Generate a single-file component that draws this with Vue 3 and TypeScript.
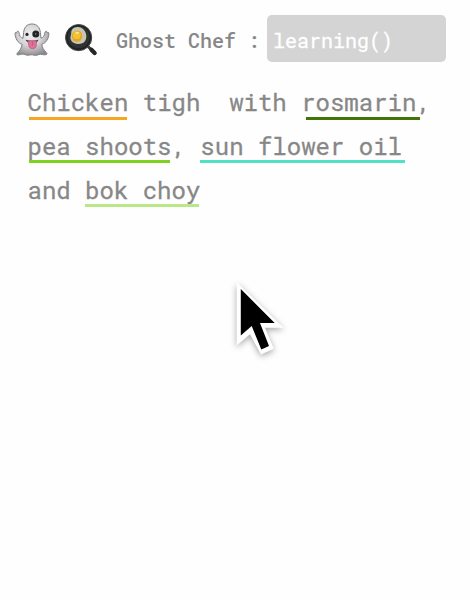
<script setup lang="ts">
interface Token {
  text: string
  tone?: string
}

const lines: Token[][] = [
  [{ text: 'Chicken', tone: 'chicken' }, { text: ' tigh  with ' }, { text: 'rosmarin', tone: 'rosmarin' }, { text: ',' }],
  [{ text: 'pea shoots', tone: 'pea' }, { text: ', ' }, { text: 'sun flower oil', tone: 'oil' }],
  [{ text: 'and ' }, { text: 'bok choy', tone: 'bok' }],
]
</script>

<template>
  <main class="screen">
    <header class="bar">
      <svg class="ghost" viewBox="0 0 36 34" aria-hidden="true">
        <defs>
          <radialGradient id="body" cx="45%" cy="35%" r="70%">
            <stop offset="0" stop-color="#f0f0f1" />
            <stop offset="0.5" stop-color="#d4d4d6" />
            <stop offset="1" stop-color="#88888b" />
          </radialGradient>
        </defs>
        <path d="M18 1C12.5 1 10.2 4.5 9.6 9.5L9 15.3C6.8 15 5.2 12.7 5 9.7C4.8 7.6 2.7 7.7 2.6 9.8C2.1 9 .8 9.3 1 10.8C1.3 15.5 4 20.3 8.2 21.3C7.5 25 5.8 28.1 3.1 30.3C2.1 31.4 3.4 32.2 5 31.8C7.7 31 9.4 30.8 11.4 31.7C14 33 16 31.4 18.4 31.8C21 32.7 23 32.4 25 31.4C27.5 30.7 29 32.3 31.7 31.7C33.3 31.4 33.2 30.3 32.2 29.4C29.5 27 28.3 24.4 27.8 21.2C32 20.1 34.6 15.8 34.9 10.8C35 9.2 33.9 8.8 33.2 9.8C33 7.8 31.2 7.7 30.9 9.8C30.5 12.8 29.2 14.7 27 15.2L26.4 9.5C25.8 4.5 23.3 1 18 1Z" fill="url(#body)" stroke="#808083" stroke-width="1" />
        <ellipse cx="13" cy="11.4" rx="1.6" ry="1.7" fill="#28282a" />
        <circle cx="21.8" cy="11.1" r="3.5" fill="#242426" />
        <circle cx="21.7" cy="10.9" r="0.8" fill="#777" />
        <path d="M11.5 16.8Q18.2 18.8 24.4 16.7Q23.4 20.2 18 20.2Q13 20 11.5 16.8Z" fill="#4b3339" />
        <path d="M14.1 17.8H22.4V22.2C22.4 27 14.8 27 14.6 22.2Z" fill="#df7097" stroke="#b94e76" stroke-width="0.6" />
        <path d="M18.4 18.5V22.5" stroke="#bd4f79" stroke-width="0.8" />
      </svg>
      <svg class="pan" viewBox="0 0 36 36" aria-hidden="true">
        <path d="M23.5 23L31 30.3" stroke="#393a39" stroke-width="3" stroke-linecap="round" />
        <path d="M27.4 26.7L30.6 30" stroke="#252625" stroke-width="4.2" stroke-linecap="round" />
        <circle cx="14.6" cy="14.6" r="13.1" fill="#202221" stroke="#494b49" stroke-width="1" />
        <circle cx="14.6" cy="14.2" r="11" fill="#303331" />
        <path d="M12 4.2C17 3 20.6 6.4 21.9 10.6C23.2 15 21.6 19.6 17.6 20.6C14.5 21.8 8.3 20.8 7 17C5.6 14.2 7.4 12.2 7.2 9.6C7.2 6.8 9 4.6 12 4.2Z" fill="#c5c5b8" />
        <ellipse cx="13.1" cy="13.1" rx="5.2" ry="5.7" fill="#e8a51f" />
        <ellipse cx="12.8" cy="12.2" rx="3.8" ry="3.9" fill="#f2c435" />
        <ellipse cx="13.2" cy="9.8" rx="1.6" ry="0.9" fill="#fff0a5" />
      </svg>
      <h1 class="title">Ghost Chef :</h1>
      <div class="state">learning()</div>
    </header>
    <section class="recipe">
      <p v-for="(line, i) in lines" :key="i" class="line"><span v-for="(t, j) in line" :key="j" :class="t.tone ? ['term', t.tone] : 'plain'">{{ t.text }}</span></p>
    </section>
    <svg class="pointer" viewBox="0 0 70 90" aria-hidden="true">
      <path d="M6.7 11V74.5L20 63.3L31 83.6L43.8 77.8L35 56.8H53.5Z" fill="#fff" />
      <path d="M10.8 18V64.5L21.7 55L31.3 78.5L39 75L30 52H44.7Z" fill="#000" />
    </svg>
  </main>
</template>

<style>
body {
  background: #fefefe;
}
</style>

<style scoped>
.screen {
  position: relative;
  box-sizing: border-box;
  width: 470px;
  height: 600px;
  padding: 15px 0 0 14px;
  overflow: hidden;
  background: #fefefe;
  color: #878787;
  font-family: "Roboto Mono", "Liberation Mono", monospace;
}
.bar {
  display: flex;
  align-items: center;
  height: 47px;
}
.ghost {
  width: 36px;
  height: 34px;
  margin-top: 3px;
}
.pan {
  width: 36px;
  height: 36px;
  margin: 5px 0 0 14px;
}
.title {
  width: 151px;
  margin: 2px 0 0 16px;
  font-size: 20px;
  font-weight: 500;
  line-height: 28px;
  white-space: pre;
}
.state {
  box-sizing: border-box;
  width: 179px;
  height: 47px;
  padding: 2px 6px 0;
  border-radius: 5px;
  background: #d4d4d4;
  color: #fff;
  font-size: 20px;
  line-height: 47px;
  -webkit-text-stroke: 0.3px #fff;
}
.recipe {
  padding: 18px 0 0 13.5px;
}
.line {
  height: 44px;
  margin: 0;
  font-size: 24px;
  line-height: 44px;
  white-space: pre;
  -webkit-text-stroke: 0.3px #878787;
}
.term {
  position: relative;
}
.term::after {
  content: "";
  position: absolute;
  left: 1px;
  right: 0;
  bottom: -1px;
  height: 3px;
  background: var(--tone);
}
.chicken { --tone: #f6a623; }
.chicken::after { right: 1px; bottom: -2px; }
.rosmarin { --tone: #417505; }
.rosmarin::after { left: 5px; right: -4px; bottom: -2px; }
.pea { --tone: #7ed321; }
.pea::after { right: 1.5px; }
.oil { --tone: #50e3c2; }
.oil::after { left: 0; right: -3px; }
.bok { --tone: #b8e986; }
.bok::after { left: 0; right: 1px; }
.pointer {
  position: absolute;
  left: 230px;
  top: 271px;
  width: 70px;
  height: 90px;
  filter: drop-shadow(0 2px 3px rgba(0, 0, 0, 0.34));
}
</style>
